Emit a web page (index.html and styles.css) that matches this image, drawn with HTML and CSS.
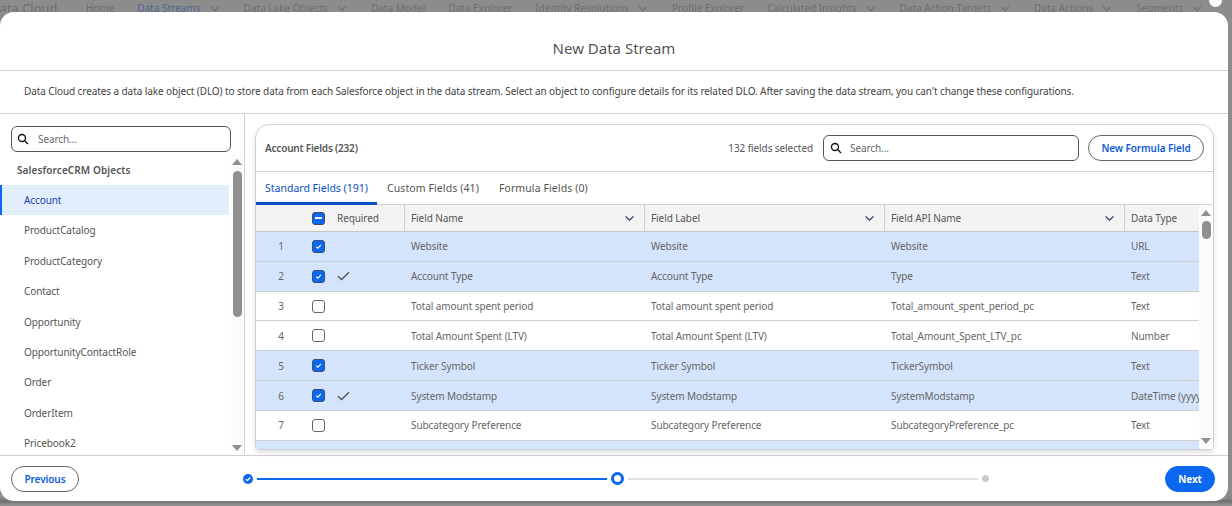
FILE: index.html
```html
<!DOCTYPE html>
<html lang="en">
<head>
  <meta charset="UTF-8">
  <title>New Data Stream</title>
  <link rel="stylesheet" href="styles.css">
</head>
<body>
  <!-- App nav behind the overlay -->
  <nav class="topnav">
    <span class="brand">Data Cloud</span>
    <span class="nav-item home">Home</span>
    <span class="nav-item active">Data Streams</span><span class="nav-chev"></span>
    <span class="nav-item">Data Lake Objects</span><span class="nav-chev"></span>
    <span class="nav-item">Data Model</span>
    <span class="nav-item">Data Explorer</span>
    <span class="nav-item">Identity Resolutions</span><span class="nav-chev"></span>
    <span class="nav-item">Profile Explorer</span>
    <span class="nav-item">Calculated Insights</span><span class="nav-chev"></span>
    <span class="nav-item">Data Action Targets</span><span class="nav-chev"></span>
    <span class="nav-item">Data Actions</span><span class="nav-chev"></span>
    <span class="nav-item">Segments</span><span class="nav-chev"></span>
  </nav>
  <span class="close-dot"></span>

  <main class="modal">
    <header class="modal-head">New Data Stream</header>
    <p class="modal-desc">Data Cloud creates a data lake object (DLO) to store data from each Salesforce object in the data stream. Select an object to configure details for its related DLO. After saving the data stream, you can't change these configurations.</p>

    <div class="modal-body">
      <!-- Object list -->
      <aside class="objects">
        <div class="search side-search">
          <svg class="search-icon" viewBox="0 0 14 14"><circle cx="5.8" cy="5.8" r="4.1"/><path d="M8.8 8.8l4 4"/></svg>
          <span>Search...</span>
        </div>
        <div class="objects-main">
          <div class="objects-list">
            <div class="group-title">SalesforceCRM Objects</div>
            <div class="object selected">Account</div>
            <div class="object">ProductCatalog</div>
            <div class="object">ProductCategory</div>
            <div class="object">Contact</div>
            <div class="object">Opportunity</div>
            <div class="object">OpportunityContactRole</div>
            <div class="object">Order</div>
            <div class="object">OrderItem</div>
            <div class="object">Pricebook2</div>
          </div>
          <div class="scrollbar side-scroll">
            <span class="arrow-up"></span>
            <span class="thumb"></span>
            <span class="arrow-down"></span>
          </div>
        </div>
      </aside>

      <!-- Field table -->
      <section class="card">
        <div class="card-head">
          <span class="card-title">Account Fields (232)</span>
          <span class="selected-count">132 fields selected</span>
          <div class="search card-search">
            <svg class="search-icon" viewBox="0 0 14 14"><circle cx="5.8" cy="5.8" r="4.1"/><path d="M8.8 8.8l4 4"/></svg>
            <span>Search...</span>
          </div>
          <button class="btn formula-btn">New Formula Field</button>
        </div>
        <div class="tabs">
          <span class="tab current">Standard Fields (191)</span>
          <span class="tab">Custom Fields (41)</span>
          <span class="tab">Formula Fields (0)</span>
        </div>
        <div class="table-wrap">
          <div class="table">
            <div class="row head">
              <span></span>
              <span class="box on minus"></span>
              <span class="cell-req">Required</span>
              <span class="cell sep">Field Name<svg class="chev" viewBox="0 0 12 8"><path d="M1.5 1.5L6 6l4.5-4.5"/></svg></span>
              <span class="cell sep">Field Label<svg class="chev" viewBox="0 0 12 8"><path d="M1.5 1.5L6 6l4.5-4.5"/></svg></span>
              <span class="cell sep">Field API Name<svg class="chev" viewBox="0 0 12 8"><path d="M1.5 1.5L6 6l4.5-4.5"/></svg></span>
              <span class="cell sep">Data Type</span>
            </div>
            <div class="row picked">
              <span class="num">1</span>
              <span class="box on"><svg viewBox="0 0 10 10"><path d="M2.5 5.3l1.8 1.6 3.4-3.6"/></svg></span>
              <span class="cell-req"></span>
              <span class="cell">Website</span><span class="cell">Website</span><span class="cell">Website</span><span class="cell">URL</span>
            </div>
            <div class="row picked">
              <span class="num">2</span>
              <span class="box on"><svg viewBox="0 0 10 10"><path d="M2.5 5.3l1.8 1.6 3.4-3.6"/></svg></span>
              <span class="cell-req"><svg class="req-tick" viewBox="0 0 13 10"><path d="M1 5.2l3.6 3.4L12 1.2"/></svg></span>
              <span class="cell">Account Type</span><span class="cell">Account Type</span><span class="cell">Type</span><span class="cell">Text</span>
            </div>
            <div class="row">
              <span class="num">3</span>
              <span class="box"></span>
              <span class="cell-req"></span>
              <span class="cell">Total amount spent period</span><span class="cell">Total amount spent period</span><span class="cell">Total_amount_spent_period_pc</span><span class="cell">Text</span>
            </div>
            <div class="row">
              <span class="num">4</span>
              <span class="box"></span>
              <span class="cell-req"></span>
              <span class="cell">Total Amount Spent (LTV)</span><span class="cell">Total Amount Spent (LTV)</span><span class="cell">Total_Amount_Spent_LTV_pc</span><span class="cell">Number</span>
            </div>
            <div class="row picked">
              <span class="num">5</span>
              <span class="box on"><svg viewBox="0 0 10 10"><path d="M2.5 5.3l1.8 1.6 3.4-3.6"/></svg></span>
              <span class="cell-req"></span>
              <span class="cell">Ticker Symbol</span><span class="cell">Ticker Symbol</span><span class="cell">TickerSymbol</span><span class="cell">Text</span>
            </div>
            <div class="row picked">
              <span class="num">6</span>
              <span class="box on"><svg viewBox="0 0 10 10"><path d="M2.5 5.3l1.8 1.6 3.4-3.6"/></svg></span>
              <span class="cell-req"><svg class="req-tick" viewBox="0 0 13 10"><path d="M1 5.2l3.6 3.4L12 1.2"/></svg></span>
              <span class="cell">System Modstamp</span><span class="cell">System Modstamp</span><span class="cell">SystemModstamp</span><span class="cell">DateTime (yyyy-MM-dd)</span>
            </div>
            <div class="row">
              <span class="num">7</span>
              <span class="box"></span>
              <span class="cell-req"></span>
              <span class="cell">Subcategory Preference</span><span class="cell">Subcategory Preference</span><span class="cell">SubcategoryPreference_pc</span><span class="cell">Text</span>
            </div>
            <div class="row picked cut"></div>
          </div>
          <div class="scrollbar table-scroll">
            <span class="arrow-up"></span>
            <span class="thumb"></span>
            <span class="arrow-down"></span>
          </div>
        </div>
      </section>
    </div>

    <footer class="modal-foot">
      <button class="btn prev-btn">Previous</button>
      <div class="stepper">
        <span class="step done"><svg viewBox="0 0 10 10"><circle cx="5" cy="5" r="5"/><path d="M2.7 5.2l1.6 1.5 3-3.2"/></svg></span>
        <span class="track filled"></span>
        <span class="step now"></span>
        <span class="track"></span>
        <span class="step todo"></span>
      </div>
      <button class="btn primary">Next</button>
    </footer>
  </main>
</body>
</html>
```

FILE: styles.css
```css
* {
  box-sizing: border-box;
}
html, body {
  margin: 0;
  height: 506px;
  overflow: hidden;
}
body {
  position: relative;
  background: linear-gradient(#8c8c8c 0, #8c8c8c 498px, #6f6f6f 501px, #9a9a9a 506px);
  color: #555;
  font-family: "Noto Sans", sans-serif;
  font-size: 10px;
  letter-spacing: -0.09px;
}

/* Nav behind overlay */
.topnav {
  display: flex;
  align-items: center;
  height: 12px;
  padding-top: 4px;
  white-space: nowrap;
  overflow: hidden;
  letter-spacing: 0;
  color: #6f6f6f;
  filter: blur(0.5px);
}
.brand {
  flex: none;
  width: 96px;
  margin-left: -10px;
  font-size: 13px;
}
.nav-item {
  margin-right: 23px;
}
.nav-item:has(+ .nav-chev) {
  margin-right: 11px;
}
.nav-item.active {
  color: #50688c;
}
.nav-chev {
  flex: none;
  width: 6px;
  height: 6px;
  margin: 0 26px 3px 0;
  border-right: 1px solid #6f6f6f;
  border-bottom: 1px solid #6f6f6f;
  transform: rotate(45deg);
}
.close-dot {
  position: absolute;
  top: -6px;
  left: 1209px;
  width: 13px;
  height: 13px;
  border-radius: 50%;
  background: #fff;
}

/* Modal */
.modal {
  display: flex;
  flex-direction: column;
  width: 1228px;
  height: 489px;
  background: #fff;
  border-radius: 14px;
  overflow: hidden;
}
.modal-head {
  height: 59px;
  flex: none;
  padding-top: 27px;
  border-bottom: 1px solid #cfcfcf;
  text-align: center;
  font-size: 15px;
  line-height: 19px;
  letter-spacing: 0;
  color: #555;
}
.modal-desc {
  height: 43px;
  flex: none;
  margin: 0;
  padding: 0 24px;
  border-bottom: 1px solid #cfcfcf;
  line-height: 41px;
  white-space: nowrap;
  color: #444;
}
.modal-body {
  display: flex;
  flex: 1;
  min-height: 0;
  border-bottom: 1px solid #cfcfcf;
}

/* Left list */
.objects {
  width: 245px;
  flex: none;
  margin-bottom: 1px;
  padding-top: 12px;
  border-right: 1px solid #cfcfcf;
  display: flex;
  flex-direction: column;
  overflow: hidden;
}
.search {
  display: flex;
  align-items: center;
  height: 26px;
  padding-left: 5px;
  border: 1px solid #555;
  border-radius: 6px;
  color: #666;
}
.search-icon {
  width: 12px;
  height: 12px;
  margin-right: 9px;
  fill: none;
  stroke: #111;
  stroke-width: 1.6;
}
.side-search {
  flex: none;
  width: 220px;
  margin-left: 11px;
}
.objects-main {
  display: flex;
  flex: 1;
  min-height: 0;
  margin-top: 3px;
}
.objects-list {
  width: 229px;
  flex: none;
}
.group-title {
  height: 30px;
  padding-left: 17px;
  line-height: 30px;
  font-weight: 600;
  letter-spacing: 0.1px;
  color: #555;
}
.object {
  height: 30.4px;
  padding-left: 24px;
  line-height: 30px;
  color: #555;
}
.object.selected {
  background: #e3eefd;
  border-left: 2px solid #0b66f0;
  padding-left: 22px;
  color: #1d3fae;
}

/* Scrollbars */
.scrollbar {
  display: flex;
  flex-direction: column;
  align-items: center;
  background: #fbfbfb;
}
.side-scroll {
  width: 12px;
  margin-left: 2px;
}
.thumb {
  width: 9px;
  border-radius: 5px;
  background: #8f8f8f;
}
.side-scroll .thumb {
  height: 146px;
  margin-top: 6px;
}
.arrow-up, .arrow-down {
  flex: none;
  width: 0;
  height: 0;
  border-left: 5px solid transparent;
  border-right: 5px solid transparent;
}
.arrow-up {
  margin-top: 4px;
  border-bottom: 6px solid #8f8f8f;
}
.arrow-down {
  margin-top: auto;
  margin-bottom: 3px;
  border-top: 6px solid #8f8f8f;
}

/* Fields card */
.card {
  width: 959px;
  height: 326px;
  margin: 10px 0 0 10px;
  border: 1px solid #cfcfcf;
  border-radius: 14px 14px 4px 4px;
  box-shadow: 0 3px 5px rgba(0, 0, 0, 0.12);
  overflow: hidden;
  display: flex;
  flex-direction: column;
}
.card-head {
  display: flex;
  align-items: center;
  flex: none;
  height: 47px;
  padding: 0 9px;
  border-bottom: 1px solid #cfcfcf;
}
.card-title {
  font-weight: 600;
  letter-spacing: -0.2px;
  color: #555;
  margin-right: auto;
}
.selected-count {
  margin-right: 10px;
  color: #555;
}
.card-search {
  width: 256px;
  margin-right: 9px;
  padding-left: 6px;
}
.card-search .search-icon {
  margin-right: 8px;
}
.btn {
  height: 26px;
  padding: 0;
  border: 1px solid #666;
  border-radius: 13px;
  background: #fff;
  color: #0b5cdb;
  font-family: inherit;
  font-size: 10px;
  font-weight: 600;
  letter-spacing: -0.09px;
}
.formula-btn {
  width: 116px;
}
.prev-btn {
  width: 68px;
}
.btn.primary {
  width: 50px;
  margin-left: auto;
  background: #0b66f0;
  border-color: #0b66f0;
  color: #fff;
  font-weight: 700;
}

/* Tabs */
.tabs {
  display: flex;
  flex: none;
  height: 33px;
  border-bottom: 1px solid #d4d4d4;
  letter-spacing: 0;
}
.tab {
  padding: 0 9px;
  line-height: 32px;
  font-size: 10.5px;
  color: #555;
}
.tab + .tab {
  margin-left: 1px;
  letter-spacing: 0.1px;
}
.tab + .tab + .tab {
  margin-left: 2px;
}
.tab.current {
  color: #0b4fc4;
  border-bottom: 3px solid #0b4fc4;
  height: 33px;
}

/* Table */
.table-wrap {
  display: flex;
  flex: 1;
  min-height: 0;
}
.table {
  width: 943px;
  flex: none;
  overflow: hidden;
}
.row {
  display: grid;
  grid-template-columns: 50px 25px 74px 240px 240px 240px 74px;
  align-items: center;
  height: 29.83px;
  border-bottom: 1px solid #cfcfcf;
  color: #666;
  white-space: nowrap;
}
.row.head {
  height: 27px;
  background: #f3f3f3;
  border-bottom: 1px solid #c4c4c4;
  color: #555;
}
.row.picked {
  background: #d4e4fc;
}
.row.cut {
  height: 9px;
}
.num {
  text-align: center;
}
.box {
  display: flex;
  align-items: center;
  justify-content: center;
  width: 13px;
  height: 13px;
  margin-left: 6px;
  border: 1px solid #666;
  border-radius: 3px;
  background: #fff;
}
.box.on {
  background: #0b66f0;
  border-color: #3c4f70;
}
.box svg {
  width: 9px;
  height: 9px;
  fill: none;
  stroke: #fff;
  stroke-width: 1.2;
}
.box.minus::after {
  content: "";
  width: 7px;
  height: 1.5px;
  background: #fff;
}
.cell-req {
  padding-left: 6px;
}
.req-tick {
  display: block;
  width: 13px;
  height: 10px;
  fill: none;
  stroke: #555;
  stroke-width: 1.4;
}
.cell {
  display: flex;
  align-items: center;
  height: 100%;
  padding-left: 6px;
  overflow: hidden;
}
.cell.sep {
  overflow: visible;
  box-shadow: -1px 0 0 #cfcfcf;
}
.chev {
  width: 11px;
  height: 7px;
  margin-left: auto;
  margin-right: 10px;
  fill: none;
  stroke: #24365c;
  stroke-width: 1.4;
}
.table-scroll {
  width: 14px;
  flex: none;
}
.table-scroll .arrow-up {
  margin-top: 5px;
}
.table-scroll .thumb {
  height: 18px;
  margin-top: 5px;
}
.table-scroll .arrow-down {
  margin-bottom: 5px;
}

/* Footer */
.modal-foot {
  display: flex;
  align-items: center;
  flex: none;
  height: 45px;
  padding: 0 13px 0 11px;
}
.stepper {
  display: flex;
  align-items: center;
  width: 746px;
  margin-left: 164px;
}
.step.done svg {
  display: block;
  width: 10px;
  height: 10px;
}
.step.done circle {
  fill: #0b66f0;
}
.step.done path {
  fill: none;
  stroke: #fff;
  stroke-width: 1.3;
}
.track {
  flex: 1;
  height: 2px;
  margin: 0 4px;
  background: #e2e2e2;
}
.track.filled {
  background: #0b66f0;
}
.step.now {
  width: 13px;
  height: 13px;
  border: 3px solid #0b66f0;
  border-radius: 50%;
}
.step.todo {
  width: 7px;
  height: 7px;
  border-radius: 50%;
  background: #c9c9c9;
}
```
